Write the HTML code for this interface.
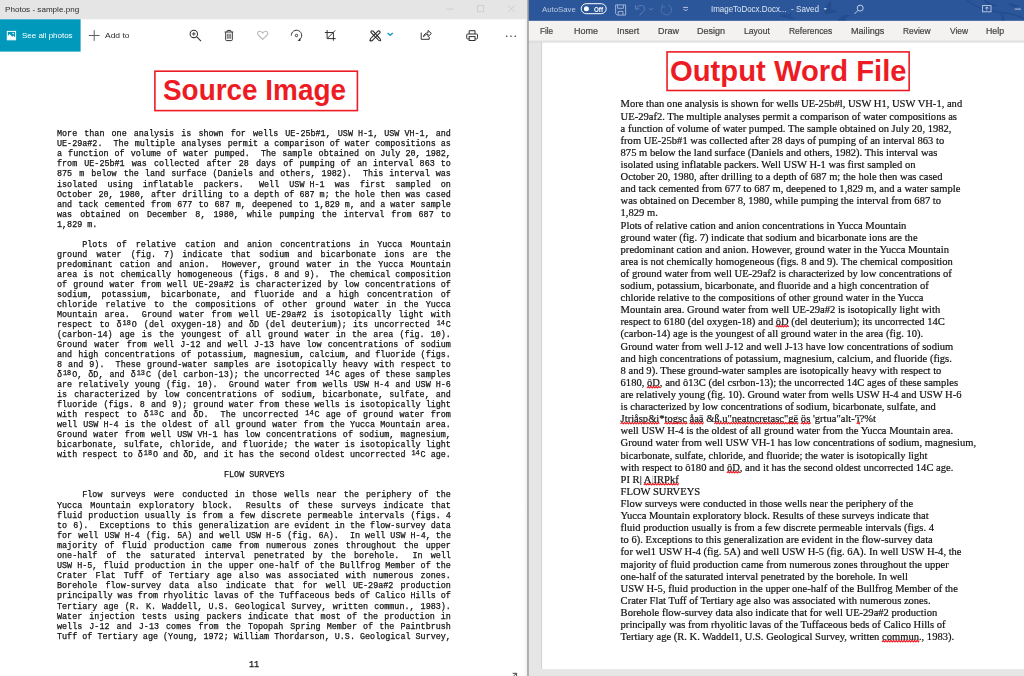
<!DOCTYPE html>
<html lang="en"><head><meta charset="utf-8"><title>Image to Docx comparison</title>
<style>
html,body{margin:0;padding:0;width:1024px;height:676px;overflow:hidden;background:#fff}
body{position:relative;font-family:"Liberation Sans",sans-serif;color:#000}
.t{position:absolute;white-space:pre;line-height:1;transform-origin:0 0}
.tb{-webkit-text-stroke:0.2px #444}
svg{position:absolute;overflow:visible}
/* ---------- Photos window ---------- */
#photos{position:absolute;left:0;top:0;width:527px;height:676px;overflow:hidden}
.ll{position:absolute;left:56.8px;width:421.390px;transform:scaleX(0.935);transform-origin:0 0;
 font-family:"Liberation Mono",monospace;font-size:9.0px;line-height:12px;height:12px;white-space:pre;color:#111;
 -webkit-text-stroke:0.25px #111}
.in{display:inline-block;width:27px}
.nb{display:inline-block;white-space:pre;word-spacing:0}
.su{display:inline-block;width:10.8px;font-size:0.82em;transform:translateY(-2.5px);line-height:1;text-align:center;white-space:pre;word-spacing:0}
.hd{position:absolute;font-weight:bold;color:#ed1c24;white-space:pre;line-height:1;transform-origin:0 0}
#lt,#rt,#lb{position:absolute;left:0;top:0;width:1024px;height:676px}
#lt{width:527px;will-change:transform}
#rt{will-change:transform}
#lb{will-change:transform}
/* ---------- Word window ---------- */
.rl{position:absolute;left:620.6px;font-family:"Liberation Serif",serif;font-size:10.56px;line-height:14px;height:14px;white-space:pre;color:#111;-webkit-text-stroke:0.2px #111}
.sq{}
.gb{color:#c6c6c6;-webkit-text-stroke:0.6px #c6c6c6}
</style></head><body>
<svg id="bg" width="1024" height="676" viewBox="0 0 1024 676" style="left:0;top:0">
 <defs>
  <linearGradient id="gsep" x1="0" x2="1" y1="0" y2="0"><stop offset="0" stop-color="#b4b4b4"/><stop offset="1" stop-color="#858585"/></linearGradient>
  <linearGradient id="gsh" x1="0" x2="0" y1="0" y2="1"><stop offset="0" stop-color="#d4d4d4"/><stop offset="1" stop-color="#d4d4d4" stop-opacity="0"/></linearGradient>
  <linearGradient id="gph" x1="0" x2="1" y1="0" y2="0"><stop offset="0" stop-color="#fff" stop-opacity="0"/><stop offset="1" stop-color="#ededed"/></linearGradient>
 </defs>
 <rect x="0" y="0" width="527.2" height="19.3" fill="#e5e5e5"/>
 <rect x="0" y="19.3" width="80.6" height="32.3" fill="#0099bc"/>
 <rect x="528.4" y="0" width="495.6" height="676" fill="#e6e6e6"/>
 <rect x="541.8" y="41.3" width="482.2" height="627.8" fill="#fff"/>
 <rect x="541.2" y="41.3" width="0.9" height="627.8" fill="#cfcfcf"/>
 <rect x="528.4" y="41.3" width="495.6" height="2.2" fill="url(#gsh)"/>
 <rect x="528.4" y="20.8" width="495.6" height="20.5" fill="#f3f2f1"/>
 <rect x="528.4" y="40.6" width="495.6" height="0.8" fill="#dcdcdc"/>
 <rect x="528.4" y="0" width="495.6" height="20.8" fill="#2b579a"/>
 <rect x="522" y="19.3" width="5.2" height="656.7" fill="url(#gph)"/>
 <rect x="527.1" y="0" width="1.5" height="676" fill="url(#gsep)"/>
 <rect x="154.9" y="71.2" width="202.5" height="39.4" fill="none" stroke="#ed1c24" stroke-width="1.6"/>
 <rect x="667.05" y="51.9" width="242.1" height="38.6" fill="none" stroke="#ed1c24" stroke-width="1.6"/>
</svg>
<div id="photos">
 <div class="hd" id="h1" style="left:162.9px;top:75.8px;font-size:28.8px;transform:scaleX(0.969)">Source Image</div>
<div id="lt">
<div class="ll" style="top:128.30px"><span style="word-spacing:2.160px">More than one analysis is shown for wells UE-25b#1, <span class="nb">USW H-1,</span></span><span style="word-spacing:1.080px"> <span class="nb">USW VH-1,</span> and</span></div>
<div class="ll" style="top:138.34px"><span style="word-spacing:1.080px">UE-29a#2.<span class="nb"> </span> The multiple analyses permit a</span><span style="word-spacing:0.000px"> comparison of water compositions as</span></div>
<div class="ll" style="top:148.38px"><span style="word-spacing:1.080px">a function of volume of water pumped.<span class="nb"> </span> The sample obtained on</span><span style="word-spacing:0.000px"> July 20, 1982,</span></div>
<div class="ll" style="top:158.42px"><span style="word-spacing:2.160px">from UE-25b#1 was collected after 28 days of</span><span style="word-spacing:1.080px"> pumping of an interval 863 to</span></div>
<div class="ll" style="top:168.46px"><span style="word-spacing:2.160px">875 m below the</span><span style="word-spacing:1.080px"> land surface (Daniels and others, 1982).<span class="nb"> </span> This interval was</span></div>
<div class="ll" style="top:178.50px"><span style="word-spacing:6.480px">isolated</span><span style="word-spacing:5.400px"> using inflatable packers.<span class="nb"> </span> Well <span class="nb">USW H-1</span> was first sampled on</span></div>
<div class="ll" style="top:188.54px"><span style="word-spacing:1.080px">October 20, 1980, after drilling to</span><span style="word-spacing:0.000px"> a depth of 687 m; the hole then was cased</span></div>
<div class="ll" style="top:198.58px"><span style="word-spacing:1.080px">and tack cemented from 677 to 687 m, deepened to 1,829</span><span style="word-spacing:0.000px"> m, and a water sample</span></div>
<div class="ll" style="top:208.62px"><span style="word-spacing:3.240px">was obtained on December 8, 1980, while</span><span style="word-spacing:2.160px"> pumping the interval from 687 to</span></div>
<div class="ll" style="top:218.66px">1,829 m.</div>
<div class="ll" style="top:238.60px"><span class="in"></span><span style="word-spacing:4.320px">Plots of relative cation</span><span style="word-spacing:3.240px"> and anion concentrations in Yucca Mountain</span></div>
<div class="ll" style="top:248.62px"><span style="word-spacing:4.320px">ground water (fig.</span><span style="word-spacing:3.240px"> 7) indicate that sodium and bicarbonate ions are the</span></div>
<div class="ll" style="top:258.64px"><span style="word-spacing:3.240px">predominant</span><span style="word-spacing:2.160px"> cation and anion.<span class="nb"> </span> However, ground water in the Yucca Mountain</span></div>
<div class="ll" style="top:268.66px"><span style="word-spacing:1.080px">area is not chemically homogeneous (figs.</span><span style="word-spacing:0.000px"> 8 and 9).<span class="nb"> </span> The chemical composition</span></div>
<div class="ll" style="top:278.68px"><span style="word-spacing:1.080px">of ground water from well UE-29a#2 is characterized by low concentrations</span><span style="word-spacing:0.000px"> of</span></div>
<div class="ll" style="top:288.70px"><span style="word-spacing:4.320px">sodium, potassium, bicarbonate, and</span><span style="word-spacing:3.240px"> fluoride and a high concentration of</span></div>
<div class="ll" style="top:298.72px"><span style="word-spacing:3.240px">chloride relative to the compositions of other ground water</span><span style="word-spacing:2.160px"> in the Yucca</span></div>
<div class="ll" style="top:308.74px"><span style="word-spacing:3.240px">Mountain</span><span style="word-spacing:2.160px"> area.<span class="nb"> </span> Ground water from well UE-29a#2 is isotopically light with</span></div>
<div class="ll" style="top:318.76px"><span style="word-spacing:2.160px">respect to δ<span class="su">18</span>O (del oxygen-18)</span><span style="word-spacing:1.080px"> and δD (del deuterium); its uncorrected <span class="su">14</span>C</span></div>
<div class="ll" style="top:328.78px"><span style="word-spacing:2.160px">(carbon-14) age is the youngest of all ground</span><span style="word-spacing:1.080px"> water in the area (fig. 10).</span></div>
<div class="ll" style="top:338.80px"><span style="word-spacing:2.160px">Ground water from well</span><span style="word-spacing:1.080px"> J-12 and well J-13 have low concentrations of sodium</span></div>
<div class="ll" style="top:348.82px"><span style="word-spacing:1.080px">and high concentrations of potassium, magnesium,</span><span style="word-spacing:0.000px"> calcium, and fluoride (figs.</span></div>
<div class="ll" style="top:358.84px"><span style="word-spacing:1.080px">8 and 9).<span class="nb"> </span> These ground-water samples are isotopically heavy with respect</span><span style="word-spacing:0.000px"> to</span></div>
<div class="ll" style="top:368.86px"><span style="word-spacing:1.080px">δ<span class="su">18</span>O, δD, and δ<span class="su">13</span>C (del carbon-13);</span><span style="word-spacing:0.000px"> the uncorrected <span class="su">14</span>C ages of these samples</span></div>
<div class="ll" style="top:378.88px"><span style="word-spacing:1.080px">are relatively young (fig. 10).<span class="nb"> </span> Ground water from wells <span class="nb">USW H-4</span> and</span><span style="word-spacing:0.000px"> <span class="nb">USW H-6</span></span></div>
<div class="ll" style="top:388.90px"><span style="word-spacing:2.160px">is characterized by low concentrations of sodium,</span><span style="word-spacing:1.080px"> bicarbonate, sulfate, and</span></div>
<div class="ll" style="top:398.92px"><span style="word-spacing:1.080px">fluoride (figs. 8 and 9); ground</span><span style="word-spacing:0.000px"> water from these wells is isotopically light</span></div>
<div class="ll" style="top:408.94px"><span style="word-spacing:2.160px">with respect to δ<span class="su">13</span>C and δD.<span class="nb"> </span> The uncorrected</span><span style="word-spacing:1.080px"> <span class="su">14</span>C age of ground water from</span></div>
<div class="ll" style="top:418.96px"><span style="word-spacing:1.080px">well <span class="nb">USW H-4</span> is the oldest of all ground water from the</span><span style="word-spacing:0.000px"> Yucca Mountain area.</span></div>
<div class="ll" style="top:428.98px"><span style="word-spacing:2.160px">Ground</span><span style="word-spacing:1.080px"> water from well <span class="nb">USW VH-1</span> has low concentrations of sodium, magnesium,</span></div>
<div class="ll" style="top:439.00px"><span style="word-spacing:1.080px">bicarbonate, sulfate, chloride, and fluoride; the</span><span style="word-spacing:0.000px"> water is isotopically light</span></div>
<div class="ll" style="top:449.02px">with respect to δ<span class="su">18</span>O and δD, and it has the second oldest uncorrected <span class="su">14</span>C age.</div>
<div class="ll" style="top:469.10px;left:223.70px;width:auto">FLOW SURVEYS</div>
<div class="ll" style="top:489.40px"><span class="in"></span><span style="word-spacing:3.240px">Flow surveys were conducted</span><span style="word-spacing:2.160px"> in those wells near the periphery of the</span></div>
<div class="ll" style="top:499.50px"><span style="word-spacing:3.240px">Yucca Mountain exploratory block.<span class="nb"> </span> Results of these surveys</span><span style="word-spacing:2.160px"> indicate that</span></div>
<div class="ll" style="top:509.60px"><span style="word-spacing:1.080px">fluid production usually is from a few discrete permeable intervals (figs.</span><span style="word-spacing:0.000px"> 4</span></div>
<div class="ll" style="top:519.70px"><span style="word-spacing:1.080px">to 6).<span class="nb"> </span> Exceptions to this generalization</span><span style="word-spacing:0.000px"> are evident in the flow-survey data</span></div>
<div class="ll" style="top:529.80px"><span style="word-spacing:1.080px">for well <span class="nb">USW H-4</span> (fig. 5A) and well <span class="nb">USW H-5</span> (fig. 6A).<span class="nb"> </span> In</span><span style="word-spacing:0.000px"> well <span class="nb">USW H-4,</span> the</span></div>
<div class="ll" style="top:539.90px"><span style="word-spacing:3.240px">majority</span><span style="word-spacing:2.160px"> of fluid production came from numerous zones throughout the upper</span></div>
<div class="ll" style="top:550.00px"><span style="word-spacing:4.320px">one-half of the saturated interval penetrated</span><span style="word-spacing:3.240px"> by the borehole.<span class="nb"> </span> In well</span></div>
<div class="ll" style="top:560.10px"><span style="word-spacing:1.080px"><span class="nb">USW H-5,</span> fluid production in the upper</span><span style="word-spacing:0.000px"> one-half of the Bullfrog Member of the</span></div>
<div class="ll" style="top:570.20px"><span style="word-spacing:3.240px">Crater Flat Tuff of</span><span style="word-spacing:2.160px"> Tertiary age also was associated with numerous zones.</span></div>
<div class="ll" style="top:580.30px"><span style="word-spacing:3.240px">Borehole flow-survey data also indicate that for well</span><span style="word-spacing:2.160px"> UE-29a#2 production</span></div>
<div class="ll" style="top:590.40px">principally was from rhyolitic lavas of the Tuffaceous beds of Calico Hills of</div>
<div class="ll" style="top:600.50px"><span style="word-spacing:2.160px">Tertiary</span><span style="word-spacing:1.080px"> age (R. K. Waddell, U.S. Geological Survey, written commun., 1983).</span></div>
<div class="ll" style="top:610.60px"><span style="word-spacing:2.160px">Water injection tests using packers</span><span style="word-spacing:1.080px"> indicate that most of the production in</span></div>
<div class="ll" style="top:620.70px"><span style="word-spacing:2.160px">wells J-12 and J-13 comes from the Topopah Spring</span><span style="word-spacing:1.080px"> Member of the Paintbrush</span></div>
<div class="ll" style="top:630.80px">Tuff of Tertiary age (Young, 1972; William Thordarson, U.S. Geological Survey,</div>
 <div class="ll" style="top:659px;left:248.8px;width:auto">11</div>
</div>
</div>
<div class="hd" id="h2" style="left:669.5px;top:57.2px;font-size:28.9px;transform:scaleX(1.012)">Output Word File</div>
<div id="rt">
<div class="rl" style="top:97.40px">More than one analysis is shown for wells UE-25b#l, USW H1, USW VH-1, and</div>
<div class="rl" style="top:109.51px">UE-29af2. The multiple analyses permit a comparison of water compositions as</div>
<div class="rl" style="top:121.62px">a function of volume of water pumped. The sample obtained on July 20, 1982,</div>
<div class="rl" style="top:133.73px">from UE-25b#1 was collected after 28 days of pumping of an interval 863 to</div>
<div class="rl" style="top:145.84px">875 m below the land surface (Daniels and others, 1982). This interval was</div>
<div class="rl" style="top:157.95px">isolated using inflatable packers. Well USW H-1 was first sampled on</div>
<div class="rl" style="top:170.06px">October 20, 1980, after drilling to a depth of 687 m; the hole then was cased</div>
<div class="rl" style="top:182.17px">and tack cemented from 677 to 687 m, deepened to 1,829 m, and a water sample</div>
<div class="rl" style="top:194.28px">was obtained on December 8, 1980, while pumping the interval from 687 to</div>
<div class="rl" style="top:206.39px">1,829 m.</div>
<div class="rl" style="top:218.50px">Plots of relative cation and anion concentrations in Yucca Mountain</div>
<div class="rl" style="top:230.61px">ground water (fig. 7) indicate that sodium and bicarbonate ions are the</div>
<div class="rl" style="top:242.72px">predominant cation and anion. However, ground water in the Yucca Mountain</div>
<div class="rl" style="top:254.83px">area is not chemically homogeneous (figs. 8 and 9). The chemical composition</div>
<div class="rl" style="top:266.94px">of ground water from well UE-29af2 is characterized by low concentrations of</div>
<div class="rl" style="top:279.05px">sodium, potassium, bicarbonate, and fluoride and a high concentration of</div>
<div class="rl" style="top:291.16px">chloride relative to the compositions of other ground water in the Yucca</div>
<div class="rl" style="top:303.27px">Mountain area. Ground water from well UE-29a#2 is isotopically light with</div>
<div class="rl" style="top:315.38px">respect to 6180 (del oxygen-18) and <span class="sq">ôD</span> (del deuterium); its uncorrected 14C</div>
<div class="rl" style="top:327.49px">(carbon-14) age is the youngest of all ground water in the area (fig. 10).</div>
<div class="rl" style="top:339.60px">Ground water from well J-12 and well J-13 have low concentrations of sodium</div>
<div class="rl" style="top:351.71px">and high concentrations of potassium, magnesium, calcium, and fluoride (figs.</div>
<div class="rl" style="top:363.82px">8 and 9). These ground-water samples are isotopically heavy with respect to</div>
<div class="rl" style="top:375.93px">6180, <span class="sq">ôD</span>, and ô13C (del csrbon-13); the uncorrected 14C ages of these samples</div>
<div class="rl" style="top:388.04px">are relatively young (fig. 10). Ground water from wells USW H-4 and USW H-6</div>
<div class="rl" style="top:400.15px">is characterized by low concentrations of sodium, bicarbonate, sulfate, and</div>
<div class="rl" style="top:412.26px"><span class="sq">Jtriåsp&amp;i</span>*<span class="sq">togsc</span> <span class="sq">åaä</span> &amp;<span class="sq">ß.u"neatncretasc"gë</span> <span class="sq">ös</span> 'grtua"alt-'<span class="sq">ï</span>?%t</div>
<div class="rl" style="top:424.37px">well USW H-4 is the oldest of all ground water from the Yucca Mountain area.</div>
<div class="rl" style="top:436.48px">Ground water from well USW VH-1 has low concentrations of sodium, magnesium,</div>
<div class="rl" style="top:448.59px">bicarbonate, sulfate, chloride, and fluoride; the water is isotopically light</div>
<div class="rl" style="top:460.70px">with respect to ô180 and <span class="sq">ôD</span>, and it has the second oldest uncorrected 14C age.</div>
<div class="rl" style="top:472.81px">PI R| <span class="sq">A<span class="gb">|</span>IRPkf</span></div>
<div class="rl" style="top:484.92px">FLOW SURVEYS</div>
<div class="rl" style="top:497.03px">Flow surveys were conducted in those wells near the periphery of the</div>
<div class="rl" style="top:509.14px">Yucca Mountain exploratory block. Results of these surveys indicate that</div>
<div class="rl" style="top:521.25px">fluid production usually is from a few discrete permeable intervals (figs. 4</div>
<div class="rl" style="top:533.36px">to 6). Exceptions to this generalization are evident in the flow-survey data</div>
<div class="rl" style="top:545.47px">for wel1 USW H-4 (fig. 5A) and well USW H-5 (fig. 6A). In well USW H-4, the</div>
<div class="rl" style="top:557.58px">majority of fluid production came from numerous zones throughout the upper</div>
<div class="rl" style="top:569.69px">one-half of the saturated interval penetrated by the borehole. In well</div>
<div class="rl" style="top:581.80px">USW H-5, fluid production in the upper one-half of the Bullfrog Member of the</div>
<div class="rl" style="top:593.91px">Crater Flat Tuff of Tertiary age also was associated with numerous zones.</div>
<div class="rl" style="top:606.02px">Borehole flow-survey data also indicate that for well UE-29a#2 production</div>
<div class="rl" style="top:618.13px">principally was from rhyolitic lavas of the Tuffaceous beds of Calico Hills of</div>
<div class="rl" style="top:630.24px">Tertiary age (R. K. Waddel1, U.S. Geological Survey, written <span class="sq">commun</span>., 1983).</div>
</div>
<div id="lb">
<span class="t" id="pt" style="left:5.24px;top:5.91px;font-size:8.0px;color:#2b2b2b;font-weight:normal;transform:scaleX(1.0104)">Photos - sample.png</span>
<span class="t" id="sa" style="left:21.85px;top:32.21px;font-size:8.0px;color:#fff;font-weight:normal;transform:scaleX(0.9980)">See all photos</span>
<span class="t" id="ad" style="left:105.00px;top:32.21px;font-size:8.0px;color:#2b2b2b;font-weight:normal;transform:scaleX(1.0593)">Add to</span>
<span class="t" id="as" style="left:542.45px;top:6.21px;font-size:8.0px;color:#bcc9e2;font-weight:normal;transform:scaleX(0.9752)">AutoSave</span>
<span class="t" id="of" style="left:593.60px;top:6.61px;font-size:6.4px;color:#fff;font-weight:bold;transform:scaleX(0.9778)">Off</span>
<span class="t" id="ti" style="left:710.83px;top:5.41px;font-size:8.3px;color:#dfe6f3;font-weight:normal;transform:scaleX(0.9574)">ImageToDocx.Docx...</span>
<span class="t" id="sv" style="left:791.06px;top:5.41px;font-size:8.3px;color:#dfe6f3;font-weight:normal;transform:scaleX(0.9802)">- Saved</span>
<span class="t tb" id="t1" style="left:539.52px;top:26.70px;font-size:8.5px;color:#444;font-weight:normal;transform:scaleX(0.9615)">File</span>
<span class="t tb" id="t2" style="left:574.47px;top:26.70px;font-size:8.5px;color:#444;font-weight:normal;transform:scaleX(1.0591)">Home</span>
<span class="t tb" id="t3" style="left:616.92px;top:26.70px;font-size:8.5px;color:#444;font-weight:normal;transform:scaleX(1.0410)">Insert</span>
<span class="t tb" id="t4" style="left:658.06px;top:26.70px;font-size:8.5px;color:#444;font-weight:normal;transform:scaleX(1.0545)">Draw</span>
<span class="t tb" id="t5" style="left:697.41px;top:26.70px;font-size:8.5px;color:#444;font-weight:normal;transform:scaleX(1.0574)">Design</span>
<span class="t tb" id="t6" style="left:743.79px;top:26.70px;font-size:8.5px;color:#444;font-weight:normal;transform:scaleX(1.0120)">Layout</span>
<span class="t tb" id="t7" style="left:788.80px;top:26.70px;font-size:8.5px;color:#444;font-weight:normal;transform:scaleX(0.9965)">References</span>
<span class="t tb" id="t8" style="left:850.91px;top:26.70px;font-size:8.5px;color:#444;font-weight:normal;transform:scaleX(1.0678)">Mailings</span>
<span class="t tb" id="t9" style="left:903.16px;top:26.70px;font-size:8.5px;color:#444;font-weight:normal;transform:scaleX(0.9855)">Review</span>
<span class="t tb" id="ta" style="left:949.55px;top:26.70px;font-size:8.5px;color:#444;font-weight:normal;transform:scaleX(0.9892)">View</span>
<span class="t tb" id="tb" style="left:986.13px;top:26.70px;font-size:8.5px;color:#444;font-weight:normal;transform:scaleX(1.0328)">Help</span>
</div>
<svg id="ic" width="1024" height="676" viewBox="0 0 1024 676" style="left:0;top:0;pointer-events:none" fill="none" stroke-linecap="butt">
 <!-- photos: picture icon -->
 <g stroke="#fff" stroke-width="1">
  <rect x="7.3" y="31.4" width="8.3" height="8.4"/>
  <path d="M7.3 39.8V36.6L9.7 34.1L12.1 36.7L13.2 35.6L15.6 38.1V39.8Z" fill="#fff" stroke="none"/>
  <circle cx="13.2" cy="33.5" r="0.8" fill="#fff" stroke="none"/>
 </g>
 <!-- plus -->
 <path d="M88.8 35.5H99.6M94.2 30.2V40.9" stroke="#555" stroke-width="0.95"/>
 <!-- magnifier -->
 <g stroke="#333" stroke-width="1.05">
  <circle cx="193.8" cy="33.9" r="3.7"/>
  <path d="M196.5 36.6L201 41.1"/>
  <path d="M192 33.9H195.6M193.8 32.1V35.7" stroke-width="0.9"/>
 </g>
 <!-- trash -->
 <g stroke="#333" stroke-width="1">
  <path d="M224.6 32H233.3"/>
  <path d="M227 31.9V31.3Q227 30.4 227.9 30.4H230.1Q231 30.4 231 31.3V31.9"/>
  <path d="M225.7 32.2V39.7Q225.7 40.6 226.6 40.6H231.4Q232.3 40.6 232.3 39.7V32.2"/>
  <path d="M227.7 33.8V38.8M229 33.8V38.8M230.3 33.8V38.8" stroke="#555" stroke-width="0.9"/>
 </g>
 <!-- heart -->
 <path d="M262.7 39.4L258.3 35C256.6 33.2 258.2 30.9 260.2 31.3C261.4 31.5 262.2 32.3 262.7 33.1C263.2 32.3 264 31.5 265.2 31.3C267.2 30.9 268.8 33.2 267.1 35Z" stroke="#b9b9b9" stroke-width="1.1" stroke-linejoin="round"/>
 <!-- rotate -->
 <g stroke="#333" stroke-width="1">
  <path d="M291.3 35.6A5.2 5.2 0 1 1 299.6 39.6"/>
  <path d="M297.6 40.9L300.6 40.7L300.2 37.9Z" fill="#222" stroke="none"/>
  <circle cx="296.5" cy="35.5" r="1.2"/>
 </g>
 <!-- crop -->
 <g stroke="#333" stroke-width="1">
  <path d="M327.1 30V38.6H335.7"/>
  <path d="M324.9 32.5H333.4V40.7"/>
  <path d="M327.4 38.3L335.3 30.4" stroke-width="1"/>
 </g>
 <!-- edit (pencil x brush) -->
 <g stroke="#2a2a2a" stroke-width="1.05" stroke-linejoin="round">
  <path d="M371.2 30.9L372.9 30.9L380.3 39.2L380.6 40.8L378.9 40.5L370.9 32.4Z"/>
  <path d="M378.2 30.8L379.9 31.3L380.1 32.6L373.4 39.3C372.6 40.9 371 41 369.9 40.7C370.3 39.6 370.2 38.4 371.5 37.6Z"/>
  <path d="M377.3 38.4L378.8 37" stroke-width="0.8"/>
 </g>
 <!-- chevron -->
 <path d="M387.6 33L390.2 35.3L392.8 33" stroke="#1c9fcb" stroke-width="1.5"/>
 <!-- share -->
 <g stroke="#333" stroke-width="1" stroke-linejoin="round">
  <path d="M421.2 32.6V39.3H429.2V37"/>
  <path d="M423.4 36.9C423.9 34.1 425.8 32.9 428 32.7V30.4L431.4 33.5L428 36.6V34.4C426.2 34.4 424.7 35.1 423.4 36.9Z"/>
 </g>
 <!-- printer -->
 <g stroke="#333" stroke-width="1">
  <path d="M469.2 34V30.7H475V34"/>
  <path d="M469.2 38.9H467.7Q466.7 38.9 466.7 37.9V35Q466.7 34 467.7 34H476.5Q477.5 34 477.5 35V37.9Q477.5 38.9 476.5 38.9H475"/>
  <rect x="469.2" y="36.6" width="5.8" height="3.9"/>
 </g>
 <!-- more dots -->
 <g fill="#333" stroke="none">
  <rect x="506" y="35.6" width="1.3" height="1.3"/><rect x="510.3" y="35.6" width="1.3" height="1.3"/><rect x="514.6" y="35.6" width="1.3" height="1.3"/>
 </g>
 <!-- photos window controls (inactive) -->
 <g stroke="#cdcdcd" stroke-width="0.9">
  <path d="M446.1 9.1H453.2"/>
  <rect x="477.4" y="5.6" width="6.2" height="6.2"/>
  <path d="M508.2 5.5L514.7 12M514.7 5.5L508.2 12"/>
 </g>
 <!-- tiny fullscreen glyph bottom -->
 <path d="M512.7 673.3H516.6V676M516.4 673.5L513.5 676" stroke="#333" stroke-width="0.9"/>
 <!-- title bar texture -->
 <g fill="#234a8b" stroke="none" opacity="0.75">
  <path d="M780 15.5C783 13.5 786 13.8 788 15.2L792 12.5L790.5 16.2C792 17.5 793.5 18.3 795 18.6C791.5 19.3 788 19 785.8 17.6C784 17.8 781.5 17 780 15.5Z"/>
  <path d="M825 9C826 5.5 828 2.5 831 0.8C831.5 4 831.3 6.5 830.4 8.6C833 9.3 835.5 10.8 837.5 12.8C834 12.6 831.5 12.9 829.3 13.8C827.5 14.5 825.3 14.2 823.8 13.1C824.8 11.8 825.2 10.4 825 9Z"/>
  <path d="M838 20.6C839.5 17.5 842 15.6 845.5 15C847.5 14.7 849.5 14.9 851 15.6C848.3 16.2 846.6 17.6 845.6 20.6Z"/>
  <path d="M968 0C975 6 985 10 1000 11.5C1010 12.5 1018 14.5 1024 18V19.5C1017 16 1009 14 1000 13C985 11.5 974 7.5 966 0Z"/>
  <path d="M986 0C989 3 993 5 998 5.5C994 7.5 989 6.5 985.5 3.5C984.5 2.5 984 1 984 0Z"/>
  <path d="M1001 13C1004 15.5 1005 18 1004.5 20.6H1001.5C1002 18 1001.5 15.5 1000 13.5Z"/>
  <path d="M1008 4C1012 3 1016 4 1019 6.5C1015 8 1011 7.5 1008 4Z"/>
 </g>
 <!-- word: autosave toggle -->
 <rect x="581.2" y="3.7" width="25" height="10" rx="5" stroke="#fff" stroke-width="1"/>
 <circle cx="586.4" cy="8.8" r="2.5" fill="#fff"/>
 <!-- save -->
 <g stroke="#a9b9d8" stroke-width="0.9">
  <path d="M615.6 4.9H625.6V15.1H617.2L615.6 13.6Z"/>
  <path d="M617.7 4.9V8.3H623.4V4.9"/>
  <path d="M618.2 15.1V11.4H623V15.1"/>
 </g>
 <!-- undo (disabled) -->
 <g stroke="#5f7fb8" stroke-width="1">
  <path d="M635.6 5.2V9H639.4"/>
  <path d="M635.8 8.8C638 5.2 642.3 4.4 644.2 7C645.6 9.2 644 11.4 639.5 15"/>
  <path d="M649.2 8.3L651 10L652.8 8.3"/>
 </g>
 <!-- redo (disabled) -->
 <g stroke="#4f72b0" stroke-width="1">
  <path d="M668.3 4.9A5.2 5.2 0 1 1 662.4 6.4"/>
  <path d="M662.2 4.3V7H664.9"/>
 </g>
 <!-- customize QAT -->
 <g stroke="#c9d3e8" stroke-width="0.9">
  <path d="M683.2 7.4H688"/>
  <path d="M683.6 9L685.6 11L687.6 9"/>
 </g>
 <!-- saved dropdown -->
 <path d="M823.6 8.2H827L825.3 10Z" fill="#dfe6f3" stroke="none"/>
 <!-- search -->
 <g stroke="#c3cfe6" stroke-width="1">
  <circle cx="860.2" cy="8.1" r="3"/>
  <path d="M858.1 10.3L854.5 13.9"/>
 </g>
 <!-- ribbon display options -->
 <g stroke="#c3cfe6" stroke-width="0.9">
  <rect x="982.6" y="5.6" width="8.4" height="6.2"/>
  <path d="M986.8 7V10.4M985.4 8.4L986.8 7L988.2 8.4"/>
 </g>
 <path d="M1014.6 9.1H1021" stroke="#c3cfe6" stroke-width="0.9"/>
 <path d="M775.8 327.0L777.1 325.4L778.4 327.0L779.7 325.4L781.0 327.0L782.3 325.4L783.6 327.0L784.9 325.4L786.2 327.0L787.5 325.4L788.7 327.0M647.0 388.0L648.3 386.4L649.6 388.0L650.9 386.4L652.2 388.0L653.5 386.4L654.8 388.0L656.1 386.4L657.4 388.0L658.7 386.4L659.9 388.0M620.6 424.0L621.9 422.4L623.2 424.0L624.5 422.4L625.8 424.0L627.1 422.4L628.4 424.0L629.7 422.4L631.0 424.0L632.3 422.4L633.6 424.0L634.9 422.4L636.2 424.0L637.5 422.4L638.8 424.0L640.1 422.4L641.4 424.0L642.7 422.4L644.0 424.0L645.3 422.4L646.6 424.0L647.9 422.4L649.2 424.0L650.5 422.4L651.8 424.0L653.1 422.4L654.4 424.0L655.7 422.4L657.0 424.0L658.3 422.4L659.3 424.0M664.5 424.0L665.8 422.4L667.1 424.0L668.4 422.4L669.7 424.0L671.0 422.4L672.3 424.0L673.6 422.4L674.9 424.0L676.2 422.4L677.5 424.0L678.8 422.4L680.1 424.0L681.4 422.4L682.7 424.0L684.0 422.4L685.3 424.0L686.6 422.4L686.8 424.0M689.5 424.0L690.8 422.4L692.0 424.0L693.3 422.4L694.6 424.0L695.9 422.4L697.2 424.0L698.5 422.4L699.8 424.0L701.1 422.4L702.4 424.0L703.5 422.4M714.3 424.0L715.6 422.4L716.9 424.0L718.2 422.4L719.5 424.0L720.8 422.4L722.1 424.0L723.4 422.4L724.7 424.0L726.0 422.4L727.3 424.0L728.6 422.4L729.9 424.0L731.2 422.4L732.5 424.0L733.8 422.4L735.1 424.0L736.4 422.4L737.7 424.0L739.0 422.4L740.3 424.0L741.6 422.4L742.9 424.0L744.2 422.4L745.5 424.0L746.8 422.4L748.1 424.0L749.4 422.4L750.7 424.0L752.0 422.4L753.3 424.0L754.6 422.4L755.9 424.0L757.2 422.4L758.5 424.0L759.8 422.4L761.1 424.0L762.4 422.4L763.7 424.0L765.0 422.4L766.3 424.0L767.6 422.4L768.9 424.0L770.2 422.4L771.5 424.0L772.8 422.4L774.1 424.0L775.4 422.4L776.7 424.0L778.0 422.4L779.3 424.0L780.6 422.4L781.9 424.0L783.2 422.4L784.5 424.0L785.8 422.4L787.1 424.0L788.4 422.4L789.7 424.0L791.0 422.4L792.3 424.0L793.6 422.4L794.9 424.0L796.2 422.4L797.5 424.0L798.2 422.4M800.9 424.0L802.2 422.4L803.5 424.0L804.8 422.4L806.1 424.0L807.4 422.4L808.7 424.0L810.0 422.4L810.2 424.0M856.7 424.0L858.0 422.4L859.3 424.0L859.7 422.4M726.9 473.0L728.2 471.4L729.5 473.0L730.8 471.4L732.1 473.0L733.4 471.4L734.7 473.0L736.0 471.4L737.3 473.0L738.6 471.4L739.8 473.0M643.8 485.0L645.1 483.4L646.4 485.0L647.7 483.4L649.0 485.0L650.3 483.4L651.6 485.0L652.9 483.4L654.2 485.0L655.5 483.4L656.8 485.0L658.1 483.4L659.4 485.0L660.7 483.4L662.0 485.0L663.3 483.4L664.6 485.0L665.9 483.4L667.2 485.0L668.5 483.4L669.8 485.0L671.1 483.4L672.4 485.0L673.7 483.4L675.0 485.0L676.3 483.4L677.6 485.0L678.8 483.4M882.0 642.0L883.3 640.4L884.6 642.0L885.9 640.4L887.2 642.0L888.5 640.4L889.8 642.0L891.1 640.4L892.4 642.0L893.7 640.4L895.0 642.0L896.3 640.4L897.6 642.0L898.9 640.4L900.2 642.0L901.5 640.4L902.8 642.0L904.1 640.4L905.4 642.0L906.7 640.4L908.0 642.0L909.3 640.4L910.6 642.0L911.9 640.4L913.2 642.0L914.5 640.4L915.8 642.0L917.1 640.4L918.4 642.0L919.0 640.4" stroke="#ee1c24" stroke-width="1.15" stroke-linejoin="round" fill="none"/>
</svg>

</body></html>
